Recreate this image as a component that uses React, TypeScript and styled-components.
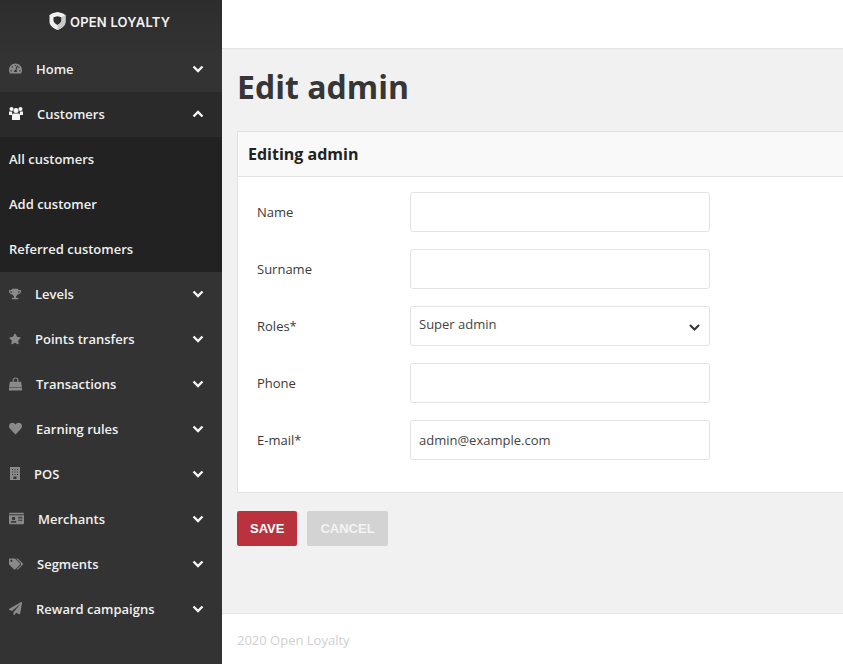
import React from 'react';
import styled, { createGlobalStyle } from 'styled-components';
import {
  FaTachometerAlt,
  FaTrophy,
  FaStar,
  FaHeart,
  FaIdCard,
  FaTags,
  FaPaperPlane,
} from 'react-icons/fa';
import type { IconType } from 'react-icons';

const GlobalStyle = createGlobalStyle`
  html, body {
    margin: 0;
    padding: 0;
    height: 100%;
    overflow: hidden;
  }
  body {
    font-family: 'Open Sans', 'Liberation Sans', sans-serif;
    background: #f1f1f1;
  }
  * {
    box-sizing: border-box;
  }
`;

const Layout = styled.div`
  display: flex;
  width: 843px;
  height: 664px;
  overflow: hidden;
`;

const Sidebar = styled.aside`
  flex: 0 0 222px;
  display: flex;
  flex-direction: column;
  background: linear-gradient(180deg, #2d2d2d 0, #333 60px);
`;

const LogoRow = styled.div`
  height: 47px;
  padding: 12px 0 0 49px;
  display: flex;
  align-items: flex-start;
  gap: 4px;
`;

const LogoText = styled.span`
  margin-top: 1px;
  font-family: Inter, 'Open Sans', sans-serif;
  font-size: 13px;
  line-height: 18px;
  font-weight: 600;
  letter-spacing: 0.2px;
  color: #f2f2f2;
  white-space: nowrap;
`;

const NavRow = styled.div<{ $open?: boolean }>`
  height: 45px;
  display: flex;
  align-items: center;
  padding: 0 18px 0 9px;
  background: ${props => (props.$open ? '#2a2a2a' : 'transparent')};
`;

const NavIcon = styled.span<{ $width: number; $open?: boolean }>`
  flex: 0 0 ${props => props.$width}px;
  width: ${props => props.$width}px;
  margin-right: 14px;
  margin-top: -2px;
  display: flex;
  justify-content: center;
  color: ${props => (props.$open ? '#f5f5f5' : '#8a8a8a')};
`;

const NavLabel = styled.span`
  flex: 1;
  margin-top: -2px;
  font-size: 13px;
  font-weight: 600;
  color: #f0f0f0;
  white-space: nowrap;
`;

const Chevron = styled.svg`
  width: 12px;
  height: 8px;
  margin-top: -2px;
`;

const SubMenu = styled.div`
  background: #222;
`;

const SubRow = styled.div`
  height: 45px;
  display: flex;
  align-items: center;
  padding: 0 0 2px 9px;
  font-size: 13px;
  font-weight: 600;
  color: #f0f0f0;
`;

const Main = styled.main`
  flex: 1;
  min-width: 0;
  display: flex;
  flex-direction: column;
`;

const TopBar = styled.header`
  height: 49px;
  background: #fff;
  border-bottom: 1px solid #e3e3e3;
`;

const Content = styled.div`
  flex: 1;
  padding: 0 0 0 15px;
  background: #f1f1f1;
`;

const PageTitle = styled.h1`
  margin: 0;
  padding-top: 15px;
  height: 82px;
  font-size: 32px;
  line-height: 45px;
  font-weight: 700;
  color: #363636;
`;

const Card = styled.section`
  width: 620px;
  height: 362px;
  background: #fff;
  border: 1px solid #e1e1e1;
`;

const CardHeader = styled.div`
  height: 45px;
  padding-left: 10px;
  display: flex;
  align-items: center;
  background: #f9f9f9;
  border-bottom: 1px solid #e3e3e3;
  font-size: 16px;
  font-weight: 700;
  color: #222;
`;

const Form = styled.form`
  display: flex;
  flex-direction: column;
  gap: 17px;
  padding: 15px 0 0 19px;
`;

const FormRow = styled.div`
  display: flex;
  align-items: center;
  height: 40px;
`;

const Label = styled.label`
  flex: 0 0 153px;
  font-size: 13px;
  color: #3a3a3a;
`;

const TextInput = styled.input`
  width: 300px;
  height: 40px;
  padding: 0 8px;
  background: #fff;
  border: 1px solid #e3e3e3;
  border-radius: 3px;
  outline: none;
  font-family: inherit;
  font-size: 13px;
  color: #444;
`;

const SelectBox = styled.div`
  width: 300px;
  height: 40px;
  padding: 0 9px 4px 8px;
  display: flex;
  align-items: center;
  justify-content: space-between;
  background: #fff;
  border: 1px solid #e3e3e3;
  border-radius: 3px;
  font-size: 13px;
  color: #444;
`;

const SelectChevron = styled.svg`
  width: 11px;
  height: 7px;
  margin-top: 6px;
`;

const Actions = styled.div`
  display: flex;
  gap: 10px;
  margin-top: 18px;
`;

const Button = styled.button<{ $primary?: boolean }>`
  height: 35px;
  padding: 0 13px;
  border: none;
  border-radius: 2px;
  background: ${props => (props.$primary ? '#b9323d' : '#d3d3d3')};
  color: ${props => (props.$primary ? '#fff' : '#f4f4f4')};
  font-family: 'Liberation Sans', Arial, sans-serif;
  font-size: 13px;
  font-weight: 700;
`;

const Footer = styled.footer`
  height: 51px;
  padding: 2px 0 0 15px;
  display: flex;
  align-items: center;
  background: #fff;
  border-top: 1px solid #e3e3e3;
  font-size: 13px;
  color: #d0d0d0;
`;

const ChevronIcon: React.FC<{ up?: boolean }> = ({ up }) => (
  <Chevron viewBox="0 0 12 8">
    <path
      d={up ? 'M1.500 6.500 6 2l4.500 4.500' : 'M1.500 1.500 6 6l4.500-4.500'}
      fill="none"
      stroke="#f5f5f5"
      strokeWidth="2.400"
    />
  </Chevron>
);

const ShieldLogo = () => (
  <svg width="17" height="18" viewBox="0 0 17 18">
    <path
      fillRule="evenodd"
      fill="#f0f0f0"
      d="M8.500 0 13.500 1.200 16.500 3v6.500c0 3.800-3.400 6.800-8 8.500-4.600-1.700-8-4.700-8-8.500V3L3.500 1.200ZM8.500 4.200 4.500 5.200v3.300c0 1.500 1.600 3.300 4 4.600 2.400-1.300 4-3.100 4-4.600V5.200Z"
    />
    <path fill="#c9c9c9" d="M16.500 3v6.500c0 3.800-3.400 6.800-8 8.500v-4.900c2.400-1.300 4-3.100 4-4.600V5.200Z" />
  </svg>
);

const UsersIcon = () => (
  <svg width="14" height="13" viewBox="0 0 14 13">
    <g fill="currentColor">
      <circle cx="2.500" cy="2" r="2" />
      <circle cx="11.500" cy="2" r="2" />
      <circle cx="7" cy="3.500" r="2.500" />
      <path d="M0 4.500h3.200L3 8H0ZM10.800 4.500H14V8h-3ZM3.800 6.500h6.400l.8 1.500v5H3V8Z" />
    </g>
  </svg>
);

const BagIcon = () => (
  <svg width="14" height="14" viewBox="0 0 14 14">
    <path fill="none" stroke="currentColor" strokeWidth="1.200" d="M4.500 5V2.600C4.500 1.400 5.500.6 7 .6s2.500.8 2.500 2V5" />
    <path fill="currentColor" d="M1 4.500h12l1 6H0ZM0 11h14v3H0Z" />
  </svg>
);

const PosIcon = () => (
  <svg width="10" height="13" viewBox="0 0 10 13">
    <path
      fillRule="evenodd"
      fill="currentColor"
      d="M0 0h10v13H0ZM2 2v1h1V2Zm2.500 0v1h1V2ZM7 2v1h1V2ZM2 4.500v1h1v-1Zm2.500 0v1h1v-1Zm2.500 0v1h1v-1ZM2 7v1h1V7Zm2.500 0v1h1V7ZM7 7v1h1V7ZM3.500 9.500V12h3V9.500Z"
    />
  </svg>
);

interface NavItem {
  label: string;
  width: number;
  icon: IconType | React.FC;
  open?: boolean;
}

const topItems: NavItem[] = [
  { label: 'Home', width: 13, icon: FaTachometerAlt },
  { label: 'Customers', width: 14, icon: UsersIcon, open: true },
];

const restItems: NavItem[] = [
  { label: 'Levels', width: 12, icon: FaTrophy },
  { label: 'Points transfers', width: 12, icon: FaStar },
  { label: 'Transactions', width: 13, icon: BagIcon },
  { label: 'Earning rules', width: 13, icon: FaHeart },
  { label: 'POS', width: 11, icon: PosIcon },
  { label: 'Merchants', width: 15, icon: FaIdCard },
  { label: 'Segments', width: 14, icon: FaTags },
  { label: 'Reward campaigns', width: 13, icon: FaPaperPlane },
];

const subItems = ['All customers', 'Add customer', 'Referred customers'];

const NavEntry: React.FC<{ item: NavItem }> = ({ item }) => {
  const Icon = item.icon as IconType;
  return (
    <NavRow $open={item.open}>
      <NavIcon $width={item.width} $open={item.open}>
        <Icon size={item.width} />
      </NavIcon>
      <NavLabel>{item.label}</NavLabel>
      <ChevronIcon up={item.open} />
    </NavRow>
  );
};

const App: React.FC = () => (
  <>
    <GlobalStyle />
    <Layout>
      <Sidebar>
        <LogoRow>
          <ShieldLogo />
          <LogoText>OPEN LOYALTY</LogoText>
        </LogoRow>
        {topItems.map(item => (
          <NavEntry key={item.label} item={item} />
        ))}
        <SubMenu>
          {subItems.map(label => (
            <SubRow key={label}>{label}</SubRow>
          ))}
        </SubMenu>
        {restItems.map(item => (
          <NavEntry key={item.label} item={item} />
        ))}
      </Sidebar>
      <Main>
        <TopBar />
        <Content>
          <PageTitle>Edit admin</PageTitle>
          <Card>
            <CardHeader>Editing admin</CardHeader>
            <Form>
              <FormRow>
                <Label>Name</Label>
                <TextInput readOnly />
              </FormRow>
              <FormRow>
                <Label>Surname</Label>
                <TextInput readOnly />
              </FormRow>
              <FormRow>
                <Label>Roles*</Label>
                <SelectBox>
                  Super admin
                  <SelectChevron viewBox="0 0 11 7">
                    <path d="M1 1l4.500 4.500L10 1" fill="none" stroke="#333" strokeWidth="2" />
                  </SelectChevron>
                </SelectBox>
              </FormRow>
              <FormRow>
                <Label>Phone</Label>
                <TextInput readOnly />
              </FormRow>
              <FormRow>
                <Label>E-mail*</Label>
                <TextInput readOnly value="admin@example.com" />
              </FormRow>
            </Form>
          </Card>
          <Actions>
            <Button $primary type="button">SAVE</Button>
            <Button type="button">CANCEL</Button>
          </Actions>
        </Content>
        <Footer>2020 Open Loyalty</Footer>
      </Main>
    </Layout>
  </>
);

export default App;
